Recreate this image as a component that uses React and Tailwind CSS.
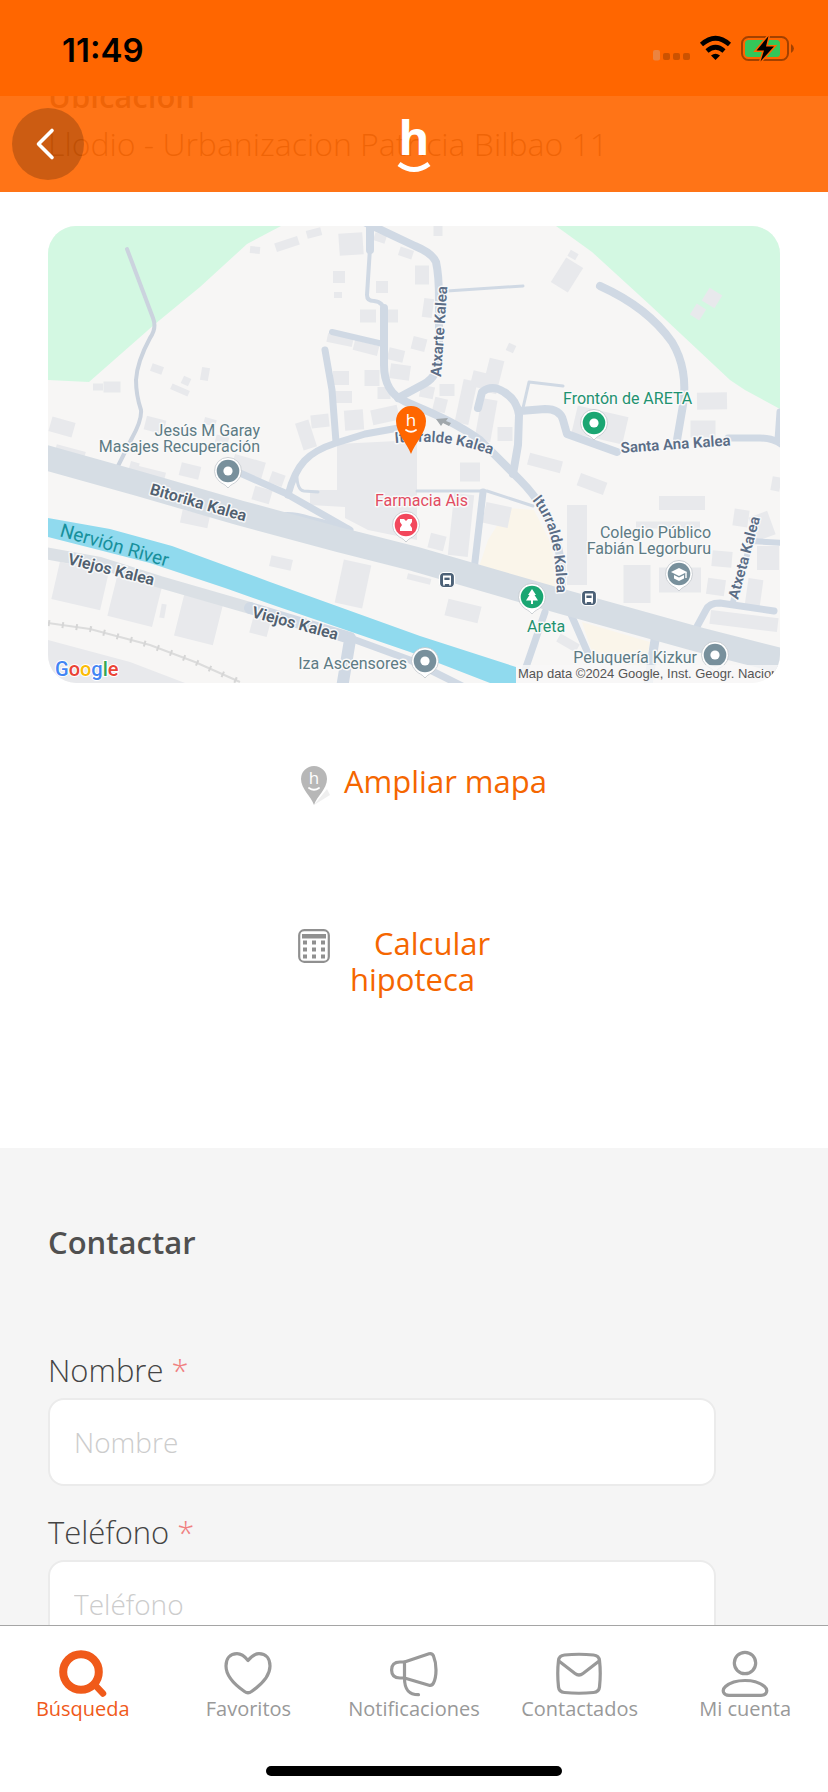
import React, { useState } from "react";

const buildings = [
  // [center x, center y, width, height, rotation]
  [351, 244, 24, 22, -4], [339, 277, 12, 12, 0], [338, 295, 8, 6, 0],
  [382, 287, 12, 12, 0], [368, 316, 16, 13, 0], [391, 316, 14, 13, 0],
  [287, 244, 24, 9, -18], [314, 233, 15, 8, -15], [255, 250, 10, 7, 5],
  [406, 253, 14, 9, 18], [380, 238, 12, 8, 18], [422, 275, 14, 19, 0],
  [438, 231, 9, 10, 0], [340, 340, 26, 9, 12], [366, 348, 25, 10, 14],
  [396, 355, 16, 12, 14], [419, 344, 14, 13, 14], [400, 372, 20, 15, 8],
  [341, 378, 16, 14, 0], [372, 378, 15, 16, 0], [343, 397, 18, 12, 0],
  [384, 393, 13, 12, 0], [354, 420, 19, 20, -4], [385, 415, 27, 15, -12],
  [306, 435, 14, 28, -18], [320, 421, 18, 13, -6], [428, 308, 10, 19, 8],
  [427, 392, 14, 12, 12], [447, 390, 15, 12, 0], [440, 405, 13, 14, 14],
  [466, 402, 14, 44, 12], [486, 420, 16, 42, 10], [493, 376, 15, 34, 14],
  [480, 380, 17, 16, 14], [511, 348, 8, 8, 25], [505, 434, 15, 14, 0],
  [567, 275, 20, 29, 32], [573, 255, 9, 7, 30], [712, 298, 15, 15, 32],
  [698, 312, 11, 13, 32], [157, 369, 12, 8, 20], [186, 381, 8, 8, 25],
  [180, 390, 19, 6, 24], [205, 374, 8, 13, 10], [98, 387, 10, 7, 0],
  [112, 387, 17, 11, 0], [62, 427, 24, 15, 16], [155, 425, 20, 14, 14],
  [210, 422, 12, 7, 15], [222, 440, 13, 8, 15], [70, 453, 30, 10, 15],
  [600, 425, 52, 28, 13], [712, 401, 30, 17, -1], [703, 429, 25, 17, 0],
  [545, 463, 34, 12, 15], [592, 484, 28, 13, 20], [470, 472, 20, 19, 0],
  [577, 545, 20, 80, 0], [682, 503, 46, 14, 0], [668, 525, 64, 7, 0],
  [637, 584, 27, 38, 0], [680, 580, 42, 25, 0], [497, 515, 26, 21, 12],
  [461, 525, 20, 62, 6], [437, 542, 16, 15, 14], [463, 611, 34, 17, 14],
  [419, 579, 24, 6, 14], [741, 518, 15, 17, 8], [762, 526, 20, 25, -20],
  [768, 558, 22, 24, 0], [722, 559, 20, 16, 5], [716, 587, 18, 16, 8],
  [754, 593, 15, 28, 8], [744, 621, 68, 14, 7], [776, 484, 9, 14, 10],
  [568, 643, 22, 9, 30], [281, 563, 22, 11, 13], [353, 584, 28, 44, 12],
  [195, 519, 28, 13, 12], [134, 467, 9, 10, 16], [150, 475, 30, 12, 14],
  [190, 471, 20, 13, 14], [248, 467, 32, 18, 16], [277, 479, 14, 12, 20],
  [262, 495, 18, 14, 16], [80, 586, 50, 38, 13], [135, 600, 46, 44, 14],
  [199, 618, 40, 46, 14], [163, 611, 5, 14, 10], [260, 627, 18, 16, 15],
];

const roads = [
  ["M370 224 370 250", 8],
  ["M370 248 367 295Q367 301 374 301 384 302 384 312", 4],
  ["M384 308V365C384 385 392 395 404 401 424 410 452 420 480 440L520 480C545 505 560 535 562 575L561 600", 8],
  ["M360 220 415 246Q432 253 436 262 439 275 439 300V355Q439 376 424 384L398 398", 8],
  ["M332 332 383 344", 6],
  ["M325 350 332 390 336 442", 7],
  ["M404 427 365 434 336 443C308 452 296 464 288 495", 7],
  ["M240 473 285 493 350 530", 7],
  ["M478 408 482 392Q492 384 504 392 517 400 519 415L518 445 513 474", 8],
  ["M520 411 545 409Q560 409 563 420L567 434 617 452", 8],
  ["M523 408 529 382 563 386", 3],
  ["M600 286C640 304 660 325 672 342 684 362 686 385 683 405L677 440", 8],
  ["M728 438H760Q774 438 784 446M780 412 778 440", 7],
  ["M417 491H487L533 506", 3],
  ["M483 492 474 570", 7],
  ["M447 291 523 286", 3],
  ["M693 634 706 610Q709 603 720 603L774 611", 7],
  ["M752 541 782 543M757 522 733 602", 6],
  ["M545 612 525 670M570 612 590 658", 7],
  ["M655 640 648 685", 9],
  ["M297 470Q296 490 304 491L318 492", 3],
];

const MapPoi = ({ x, y, color, children }) => (
  <g transform={`translate(${x} ${y})`}>
    <path d="M0 17C-3 13-6 13-9 10A13.5 13.5 0 1 1 9 10C6 13 3 13 0 17Z" fill="#fff" stroke="#b9bfc4" strokeWidth="0.7" />
    <circle r="11.3" fill={color} />
    {children || <circle r="4.6" fill="#fff" />}
  </g>
);

const BusStop = ({ x, y }) => (
  <g transform={`translate(${x} ${y})`}>
    <rect x="-7.5" y="-7.5" width="15" height="15" rx="4" fill="#4b6076" stroke="#fff" strokeWidth="1.2" />
    <path d="M-4-4.5H4V4H-4Z" fill="#fff" />
    <path d="M-2.6-2.4H2.6V0H-2.6Z" fill="#4b6076" />
    <path d="M-3 4V5.5M3 4V5.5" stroke="#fff" strokeWidth="1.6" />
  </g>
);

const HMark = ({ color }) => (
  <>
    <text x="0" y="5" fontSize="17" textAnchor="middle" fill={color} fontFamily="Open Sans, sans-serif">
      h
    </text>
    <path d="M-5 9Q0 12.5 5 9" fill="none" stroke={color} strokeWidth="1.8" strokeLinecap="round" />
  </>
);

const LocationMap = () => (
  <svg
    viewBox="48 226 732 457"
    className="block h-auto w-full rounded-[28px]"
    role="img"
    aria-label="Mapa"
    fontFamily="Roboto, sans-serif"
  >
    <rect x="48" y="226" width="732" height="457" fill="#f7f6f5" />
    <path d="M48 226H281L247 244 200 287 155 324 89 382 48 380Z" fill="#d3f8e2" />
    <path d="M556 226 592 252 650 305 730 380 745 390 780 409V226Z" fill="#d3f8e2" />
    <path d="M508 508 534 510 552 545 556 592 478 570 488 540Z" fill="#faf5ea" />
    <path d="M582 622 650 642 645 668 594 658Z" fill="#faf5ea" />

    <g fill="#e8e9ec">
      {buildings.map(([x, y, w, h, r], i) => (
        <rect key={i} x={x - w / 2} y={y - h / 2} width={w} height={h} transform={`rotate(${r} ${x} ${y})`} />
      ))}
      <path d="M337 444 417 440V540L368 530 345 518V507L310 505V490H337Z" />
      <path d="M48 640 130 662 185 683H48Z" />
    </g>

    {/* Calles */}
    <g fill="none" stroke="#d0d9e4" strokeLinecap="round" strokeLinejoin="round">
      <path d="M127 249 153 318Q157 328 150 338 137 362 136 380 136 395 141 410 142 420 132 438L118 466" stroke="#cbd3de" strokeWidth="4" />
      {roads.map(([d, w]) => (
        <path key={d} d={d} strokeWidth={w} />
      ))}
      <path d="M44 553 100 563 160 582 250 608" stroke="#dbe0e5" strokeWidth="12" />
      <path d="M250 608 350 638M350 640 342 688" strokeWidth="12" />
      <path d="M350 638 410 660 462 686" strokeWidth="7" />
    </g>
    <path d="M270 516Q285 508 310 516L350 526 340 540Z" fill="#d0d9e4" />
    <path d="M40 456 140 484 240 513 340 540 415 559 560 601 700 640 790 663" fill="none" stroke="#d6dde4" strokeWidth="25" />
    <path d="M48 518 110 529 172 546 270 582 420 636 516 667V683H490L410 652 273 605 225 588 150 563 48 537Z" fill="#90daee" />
    <path d="M48 623 90 629 150 645 195 662 240 682" fill="none" stroke="#dcdcdc" strokeWidth="2" />
    <path d="M48 623 90 629 150 645 195 662 240 682" fill="none" stroke="#d6d6d6" strokeWidth="6" strokeDasharray="2 12" />
    <path d="M436 419 448 418 446 421 451 423 449 426 443 423 441 426Z" fill="#a1a7ab" />

    {/* Nombres de calles */}
    <g fontSize="15" fontWeight="600" fill="#51606f" stroke="#f7f8f9" strokeWidth="3" strokeLinejoin="round" paintOrder="stroke">
      <text transform="translate(149 494) rotate(16)" fontSize="16">Bitorika Kalea</text>
      <text transform="translate(67 564) rotate(14)" fontSize="16">Viejos Kalea</text>
      <text transform="translate(251 617) rotate(15)" fontSize="16">Viejos Kalea</text>
      <g fill="#5b6d86">
        <text transform="translate(621 453) rotate(-4)">Santa Ana Kalea</text>
        <text transform="translate(441 377) rotate(-86)">Atxarte Kalea</text>
        <text transform="translate(738 600) rotate(-75)">Atxeta Kalea</text>
        <path id="iturralde-sur" d="M532 500C548 520 556 542 557 600" fill="none" stroke="none" />
        <text>
          <textPath href="#iturralde-sur">Iturralde Kalea</textPath>
        </text>
        <path id="iturralde-norte" d="M395 443C430 440 460 442 500 458" fill="none" stroke="none" />
        <text>
          <textPath href="#iturralde-norte">Iturralde Kalea</textPath>
        </text>
      </g>
    </g>
    <text transform="translate(59 536) rotate(16)" fontSize="19" fill="#17909c">
      Nervión River
    </text>

    {/* Puntos de interés */}
    <g fontSize="16" fill="#5d7b84" stroke="#f9f9f9" strokeWidth="3" strokeLinejoin="round" paintOrder="stroke">
      <text x="260" y="436" textAnchor="end">Jesús M Garay</text>
      <text x="260" y="452" textAnchor="end">Masajes Recuperación</text>
      <text x="711" y="538" textAnchor="end">Colegio Público</text>
      <text x="711" y="554" textAnchor="end">Fabián Legorburu</text>
      <text x="697" y="663" textAnchor="end">Peluquería Kizkur</text>
      <text x="407" y="669" textAnchor="end">Iza Ascensores</text>
      <text x="563" y="404" fill="#1f9270">Frontón de ARETA</text>
      <text x="527" y="632" fill="#1f9270">Areta</text>
      <text x="375" y="506" fill="#e24b61">Farmacia Ais</text>
    </g>
    <MapPoi x={228} y={471} color="#78909c" />
    <MapPoi x={594} y={423} color="#1aa672" />
    <MapPoi x={715} y={655} color="#78909c" />
    <MapPoi x={425} y={661} color="#78909c" />
    <MapPoi x={406} y={525} color="#f2475c">
      <path d="M-6-6H-2L0-4 2-6H6V-3L4 0 6 3V6H-6V3L-4 0-6-3Z" fill="#fff" />
    </MapPoi>
    <MapPoi x={532} y={597} color="#1aa672">
      <path d="M0-8 4-2H2.5L6 3.5H1V7H-1V3.5H-6L-2.5-2H-4Z" fill="#fff" />
    </MapPoi>
    <MapPoi x={679} y={574} color="#78909c">
      <path d="M-8-2 0-6 8-2 0 2ZM-5 1 0 3.5 5 1V4.5L0 7-5 4.5Z" fill="#fff" />
      <path d="M7-2V4" stroke="#fff" strokeWidth="1.4" />
    </MapPoi>
    <BusStop x={447} y={580} />
    <BusStop x={589} y={598} />
    <g transform="translate(411 421)">
      <path d="M0 33C-4 22-15 12-15 0A15 15 0 1 1 15 0C15 12 4 22 0 33Z" fill="#ff6600" />
      <HMark color="#fff" />
    </g>

    <text x="55" y="676" fontSize="20" fontWeight="500" fontFamily="Roboto, sans-serif" stroke="#fff" strokeWidth="2" paintOrder="stroke">
      <tspan fill="#4285f4">G</tspan>
      <tspan fill="#ea4335">o</tspan>
      <tspan fill="#fbbc05">o</tspan>
      <tspan fill="#4285f4">g</tspan>
      <tspan fill="#34a853">l</tspan>
      <tspan fill="#ea4335">e</tspan>
    </text>
    <rect x="516" y="665" width="264" height="18" fill="#f7f7f7" fillOpacity="0.8" />
    <svg x="516" y="664" width="258" height="19">
      <text x="2" y="14" fontSize="13" fill="#555" fontFamily="Liberation Sans, Arial, sans-serif">
        Map data ©2024 Google, Inst. Geogr. Nacional
      </text>
    </svg>
  </svg>
);

const StatusIcons = () => (
  <svg viewBox="652 34 144 30" className="h-[30px] w-36" aria-hidden="true">
    <rect x="653" y="51" width="7" height="10.5" rx="2" fill="#eb8440" />
    <rect x="663" y="54" width="7" height="7" rx="2" fill="#cc5200" />
    <rect x="673" y="54" width="7" height="7" rx="2" fill="#cc5200" />
    <rect x="683" y="54" width="7" height="7" rx="2" fill="#cc5200" />
    <g fill="none" stroke="#000" strokeWidth="4.6">
      <path d="M701.5 45.5Q715.5 33 729.5 45.5" />
      <path d="M707 52Q715.5 44.5 724 52" />
    </g>
    <path d="M715.5 61 711 56.5Q715.5 53 720 56.5Z" />
    <rect x="742" y="38" width="46" height="23" rx="6.5" fill="none" stroke="#a34100" strokeWidth="2" />
    <path d="M791 45Q794 47 794 49.5T791 54Z" fill="#a34100" />
    <rect x="745" y="41" width="35" height="17" rx="3.5" fill="#34c759" />
    <path d="M768.5 37 756.5 51.5H764L760.5 62.5 774 47.5H766Z" fill="#000" stroke="#ff6600" strokeWidth="3" paintOrder="stroke" />
  </svg>
);

const tabs = [
  {
    id: "busqueda",
    label: "Búsqueda",
    icon: (
      <>
        <circle cx="22" cy="24" r="17.8" strokeWidth="8" />
        <path d="M36 37 44 45.5" strokeWidth="6.5" />
      </>
    ),
  },
  {
    id: "favoritos",
    label: "Favoritos",
    icon: (
      <path d="M24 12.5C20 7.5 17 5.7 13 5.7 6 5.7 2 10.5 2 18 2 30 14 39 20.5 43.5Q24 46 27.5 43.5C34 39 46 30 46 18 46 10.5 42 5.7 35 5.7 31 5.7 28 7.5 24 12.5Z" />
    ),
  },
  {
    id: "notificaciones",
    label: "Notificaciones",
    icon: (
      <>
        <path d="M14.5 14H10Q1.6 14 1.6 22T10 30H14.5" />
        <path d="M14.5 14 39 5.8Q42 5 43.5 8 46 14 46 22T43.5 35Q42 38 39 37.2L14.5 30Z" />
        <path d="M14.5 30C14.5 41 18 46.7 28.5 46.7" />
      </>
    ),
  },
  {
    id: "contactados",
    label: "Contactados",
    icon: (
      <>
        <path d="M8.5 7Q23 5.5 37.5 7 43 7.500 43.5 12.5 45 25 43.5 39 43 44 37.5 44.5 23 46 8.5 44.5 3 44 2.5 39 1 25 2.5 12.5 3 7.5 8.5 7Z" />
        <path d="M3.5 13.5 19 25.5Q23 28.5 27 25.5L42.5 13.5" />
      </>
    ),
  },
  {
    id: "cuenta",
    label: "Mi cuenta",
    icon: (
      <>
        <circle cx="24" cy="15" r="10.7" />
        <path d="M8 47.3H40C46 47.3 47.5 42 43.5 38.5 39 34.5 31.5 32.5 24 32.5S9 34.5 4.5 38.5C0.5 42 2 47.3 8 47.3Z" />
      </>
    ),
  },
];

const Field = ({ id, label, type }) => (
  <div className="mb-7 mr-16">
    <label htmlFor={id} className="block text-[31px] leading-9 font-light text-[#444]">
      {label} <span className="text-[#f08080]">*</span>
    </label>
    <input
      id={id}
      type={type}
      placeholder={label}
      className="mt-2.5 block h-22 w-full rounded-2xl border-2 border-[#ebebeb] bg-white px-6 text-[28px] font-light text-[#444] outline-none placeholder:text-[#ccc]"
    />
  </div>
);

export default function App() {
  const [active, setActive] = useState("busqueda");

  return (
    <div className="flex h-screen flex-col overflow-hidden bg-white font-['Open_Sans',sans-serif] text-[#505050]">
      {/* Barra de estado */}
      <div className="flex h-24 shrink-0 items-center justify-between bg-[#ff6600] pr-8 pl-15.5">
        <span className="pt-1 font-['Inter',sans-serif] text-[33px] leading-9 font-semibold text-black">
          11:49
        </span>
        <StatusIcons />
      </div>

      <main className="relative min-h-0 flex-1 overflow-hidden">
        <header className="absolute inset-x-0 top-0 z-10 grid h-24 grid-cols-3 items-center bg-[#ff6600]/91 px-3">
          <button
            aria-label="Volver"
            className="flex size-18 items-center justify-center rounded-full bg-black/20"
          >
            <svg viewBox="0 0 36 36" className="size-9" aria-hidden="true">
              <path d="M22 4.5 8.500 18 22 31.5" fill="none" stroke="#fff" strokeWidth="3.6" strokeLinecap="round" strokeLinejoin="round" />
            </svg>
          </button>
          <svg viewBox="0 0 40 60" className="h-15 w-10 justify-self-center" role="img" aria-label="Logo">
            <text x="20" y="41" fontSize="47" fontWeight="700" textAnchor="middle" fill="#fff" fontFamily="Open Sans, sans-serif">
              h
            </text>
            <path d="M5 50Q20 61 35 50" fill="none" stroke="#fff" strokeWidth="5" />
          </svg>
        </header>

        <section className="-mt-4.5 px-12">
          <h2 className="text-[31px] leading-9 font-semibold">Ubicación</h2>
          <p className="mt-3 text-[32px] leading-9 font-light">
            Llodio - Urbanizacion Patricia Bilbao 11
          </p>
          <div className="mt-16">
            <LocationMap />
          </div>

          <div className="mx-auto mt-20 flex w-62 flex-col items-start gap-[118px] pb-[151px] pl-2 text-[31px] leading-9 text-[#f56600]">
            <button className="flex items-start gap-3.5 text-left whitespace-nowrap">
              <svg viewBox="-17 -17 32 44" className="h-11 w-8 shrink-0" aria-hidden="true">
                <path d="M-1 25 12 9 15 15Z" fill="#efefef" />
                <g transform="translate(-1 -1)">
                  <path d="M0 26C-3 17-13 10-13 0A13 13 0 1 1 13 0C13 10 3 17 0 26Z" fill="#b7b7b7" />
                  <HMark color="#fff" />
                </g>
              </svg>
              Ampliar mapa
            </button>
            <button className="flex items-start gap-5 text-left">
              <svg viewBox="0 0 32 42" className="h-[42px] w-8 shrink-0" aria-hidden="true">
                <rect x="1.2" y="5.2" width="29.6" height="31.6" rx="5" fill="#fff" stroke="#909090" strokeWidth="2.2" />
                <path d="M4 9H28V13.5H4Z" fill="#909090" />
                <path d="M5 17.5H9M14 17.5H18M23 17.5H27M5 24.5H9M14 24.5H18M23 24.5H27M5 31.5H9M14 31.5H18M23 31.5H27" stroke="#909090" strokeWidth="4.2" />
              </svg>
              <span className="w-36 indent-6">Calcular hipoteca</span>
            </button>
          </div>
        </section>

        <section className="bg-[#f5f5f5] px-12 pt-19">
          <h2 className="mb-23 text-[31px] leading-9 font-semibold">Contactar</h2>
          <form>
            <Field id="nombre" label="Nombre" type="text" />
            <Field id="telefono" label="Teléfono" type="tel" />
          </form>
        </section>
      </main>

      {/* Menú inferior */}
      <nav className="shrink-0 border-t border-[#a5a5a5] bg-white pb-4">
        <div className="grid grid-cols-5 pt-[23px]">
          {tabs.map((tab) => (
            <button
              key={tab.id}
              onClick={() => setActive(tab.id)}
              className={`flex flex-col items-center text-xl leading-6 ${
                active === tab.id ? "text-[#f05a1a]" : "text-[#999]"
              }`}
            >
              <svg
                viewBox="0 1 48 48"
                className="size-12"
                fill="none"
                stroke="currentColor"
                strokeWidth="3.2"
                strokeLinecap="round"
                strokeLinejoin="round"
                aria-hidden="true"
              >
                {tab.icon}
              </svg>
              {tab.label}
            </button>
          ))}
        </div>
        <div className="mx-auto mt-[45px] h-2.5 w-74 rounded-full bg-black" />
      </nav>
    </div>
  );
}
